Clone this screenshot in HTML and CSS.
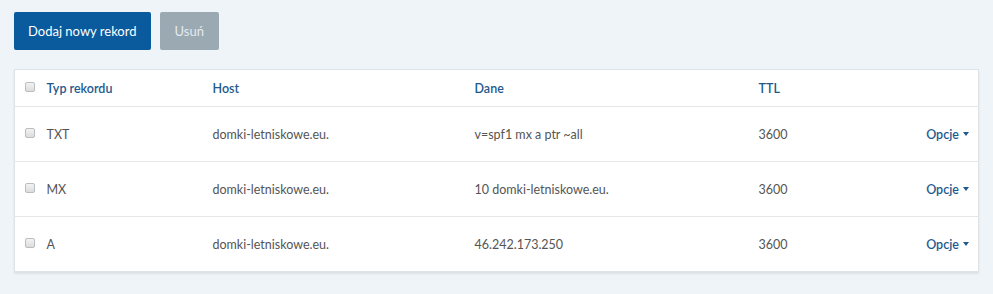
FILE: index.html
```html
<!DOCTYPE html>
<html lang="pl">
<head>
  <meta charset="UTF-8" />
  <title>Rekordy DNS</title>
  <link rel="stylesheet" href="styles.css">
</head>
<body>
  <div class="toolbar">
    <button class="btn btn-primary">Dodaj nowy rekord</button>
    <button class="btn btn-disabled">Usuń</button>
  </div>

  <table class="records">
    <thead>
      <tr>
        <th class="col-check"><span class="check"></span></th>
        <th class="col-type">Typ rekordu</th>
        <th class="col-host">Host</th>
        <th class="col-data">Dane</th>
        <th class="col-ttl">TTL</th>
        <th class="col-opts"></th>
      </tr>
    </thead>
    <tbody>
      <tr>
        <td class="col-check"><span class="check"></span></td>
        <td>TXT</td>
        <td>domki-letniskowe.eu.</td>
        <td>v=spf1 mx a ptr ~all</td>
        <td>3600</td>
        <td class="col-opts"><a href="#" class="opts">Opcje <span class="caret"></span></a></td>
      </tr>
      <tr>
        <td class="col-check"><span class="check"></span></td>
        <td>MX</td>
        <td>domki-letniskowe.eu.</td>
        <td>10 domki-letniskowe.eu.</td>
        <td>3600</td>
        <td class="col-opts"><a href="#" class="opts">Opcje <span class="caret"></span></a></td>
      </tr>
      <tr>
        <td class="col-check"><span class="check"></span></td>
        <td>A</td>
        <td>domki-letniskowe.eu.</td>
        <td>46.242.173.250</td>
        <td>3600</td>
        <td class="col-opts"><a href="#" class="opts">Opcje <span class="caret"></span></a></td>
      </tr>
    </tbody>
  </table>
</body>
</html>
```

FILE: styles.css
```css
* {
  margin: 0;
  padding: 0;
  box-sizing: border-box;
  font-family: Lato, 'Open Sans', sans-serif;
}

body {
  background: #eff4f8;
  color: #555;
  padding: 12px 14px;
  font-size: 13px;
}

.toolbar {
  display: flex;
  gap: 9px;
  margin-bottom: 19px;
}

.btn {
  height: 38px;
  padding: 0 14px;
  border: none;
  border-radius: 2px;
  font-size: 13px;
  color: white;
  cursor: pointer;
}

.btn-primary {
  background: #0a5a9e;
}

.btn-disabled {
  background: #9aa9b2;
  color: #e4eaee;
  padding: 0 15px;
}

.records {
  width: 100%;
  border-collapse: collapse;
  background: white;
  border: 1px solid #dde3e7;
  box-shadow: 0 2px 2px rgba(0, 0, 0, 0.08);
  table-layout: fixed;
}

.records th,
.records td {
  text-align: left;
  white-space: nowrap;
}

.records th {
  height: 37px;
  color: #1d5a8e;
  font-weight: 600;
  font-size: 12.5px;
}

.records td {
  height: 55px;
  border-top: 1px solid #e3e7ea;
  color: #555;
  font-size: 12.5px;
}

.col-check {
  width: 32px;
  padding-left: 10px;
}

.col-type { width: 166px; }
.col-host { width: 262px; }
.col-data { width: 284px; }
.col-ttl { width: 150px; }

.records .col-opts {
  text-align: right;
  padding-right: 9px;
}

.check {
  display: inline-block;
  width: 10px;
  height: 10px;
  border: 1px solid #b9bec2;
  border-radius: 2px;
  background: linear-gradient(#f3f3f3, #dcdcdc);
  vertical-align: middle;
  position: relative;
  top: -2px;
}

.opts {
  color: #1d5a8e;
  text-decoration: none;
  font-weight: 600;
}

.caret {
  display: inline-block;
  width: 0;
  height: 0;
  border-left: 3.5px solid transparent;
  border-right: 3.5px solid transparent;
  border-top: 4px solid #1d5a8e;
  vertical-align: middle;
  margin-left: 1px;
  position: relative;
  top: -1px;
}
```
